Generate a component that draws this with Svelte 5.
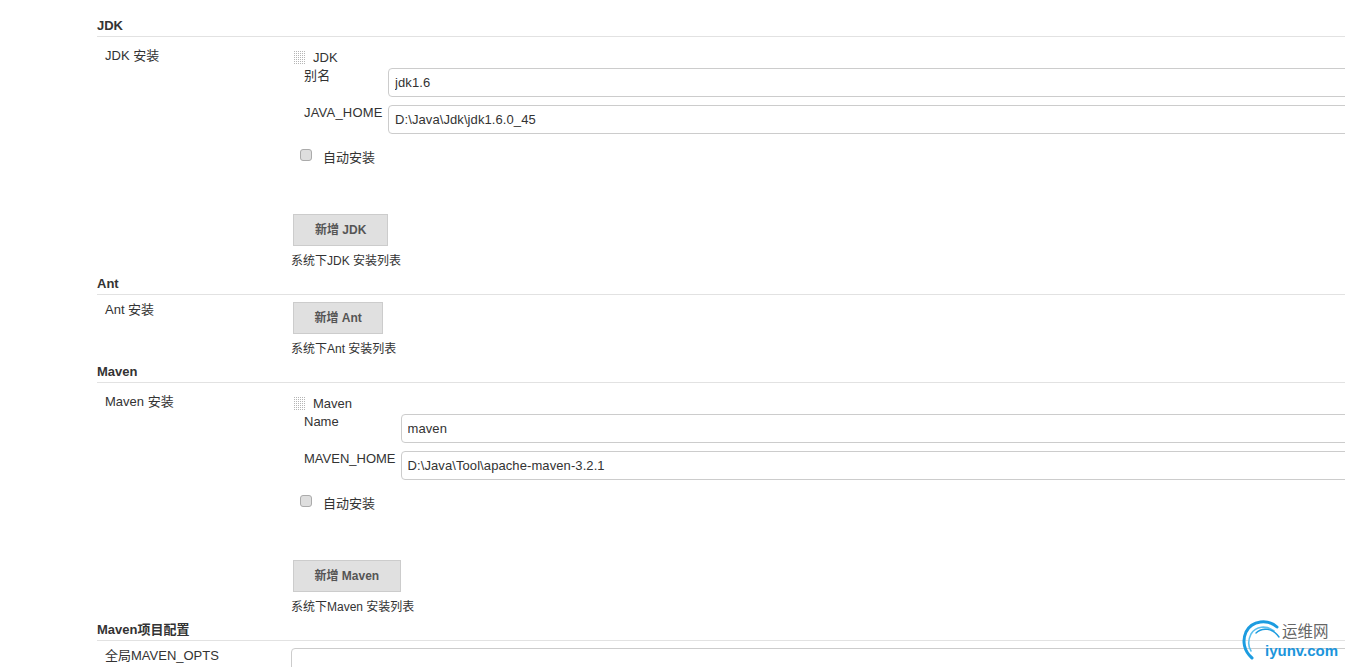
<script>
  const tools = [
    { title: 'JDK', label: 'JDK 安装', chunk: 'JDK', name: '别名', home: 'JAVA_HOME', nameValue: 'jdk1.6', homeValue: 'D:\\Java\\Jdk\\jdk1.6.0_45', add: '新增 JDK', help: '系统下JDK 安装列表' },
    { title: 'Ant', label: 'Ant 安装', add: '新增 Ant', help: '系统下Ant 安装列表' },
    { title: 'Maven', label: 'Maven 安装', chunk: 'Maven', name: 'Name', home: 'MAVEN_HOME', nameValue: 'maven', homeValue: 'D:\\Java\\Tool\\apache-maven-3.2.1', add: '新增 Maven', help: '系统下Maven 安装列表' }
  ];
</script>

<div class="page">
  <div class="form">
    {#each tools as t}
      <section>
        <h3>{t.title}</h3>
        <div class="row" class:compact={!t.chunk}>
          <div class="label">{t.label}</div>
          <div class="content">
            {#if t.chunk}
              <div class="chunk-head">
                <svg class="handle" width="12" height="14" viewBox="0 0 12 14" aria-hidden="true">
                  <defs>
                    <pattern id="dots-{t.title}" width="2" height="2" patternUnits="userSpaceOnUse">
                      <rect width="1" height="1" fill="#b5b5b5" />
                    </pattern>
                  </defs>
                  <rect width="12" height="14" fill="url(#dots-{t.title})" />
                </svg>
                <span>{t.chunk}</span>
              </div>
              <div class="fields" class:jdk={t.title === 'JDK'}>
                <label class="field-label" for="{t.title}-n">{t.name}</label>
                <input id="{t.title}-n" value={t.nameValue} />
                <label class="field-label" for="{t.title}-h">{t.home}</label>
                <input id="{t.title}-h" value={t.homeValue} />
              </div>
              <label class="auto">
                <input type="checkbox" />
                <span>自动安装</span>
              </label>
            {/if}
            <button type="button" class:wide={t.title === 'JDK'}>{t.add}</button>
            <div class="help">{t.help}</div>
          </div>
        </div>
      </section>
    {/each}
    <section>
      <h3>Maven项目配置</h3>
      <div class="row opts">
        <div class="label">全局MAVEN_OPTS</div>
        <textarea></textarea>
      </div>
    </section>
  </div>

  <div class="mark">
    <svg class="arcs" width="44" height="46" viewBox="0 0 44 46" aria-hidden="true">
      <path d="M36 9 C27 1 11 2 5 14 C1 23 3 33 11 40" fill="none" stroke="#1c9ce0" stroke-width="3" stroke-linecap="round" />
      <path d="M33 13 C25 7 15 8 10 16 C7 22 7 28 10 33" fill="none" stroke="#5cc0ee" stroke-width="1.6" stroke-linecap="round" />
      <path d="M38 19 C32 10 21 9 15 15" fill="none" stroke="#1c9ce0" stroke-width="1.4" stroke-linecap="round" />
    </svg>
    <span class="mark-cn">运维网</span>
    <span class="mark-en">iyunv.com</span>
  </div>
</div>

<style>
  :global(html), :global(body) {
    margin: 0;
    overflow: hidden;
    background: #fff;
  }
  .page {
    position: relative;
    width: 1345px;
    height: 667px;
    overflow: hidden;
    font: 13px/16px "Liberation Sans", "Noto Sans CJK SC", sans-serif;
    color: #333;
  }
  .form {
    width: 1320px;
    margin-left: 97px;
    padding-top: 17px;
  }
  h3 {
    margin: 0;
    height: 20px;
    box-sizing: border-box;
    padding-top: 1px;
    font-size: 13px;
    line-height: 16px;
    font-weight: bold;
    border-bottom: 1px solid #e2e2e2;
  }
  .row {
    display: grid;
    grid-template-columns: 196px 1fr;
    height: 238px;
    padding-left: 8px;
    box-sizing: border-box;
  }
  .row.compact {
    height: 68px;
  }
  .label {
    padding-top: 11px;
  }
  .compact .label {
    padding-top: 7px;
  }
  .content {
    min-width: 0;
  }
  .chunk-head {
    display: flex;
    align-items: center;
    gap: 7px;
    height: 16px;
    margin-top: 13px;
    margin-left: -7px;
  }
  .handle {
    flex: none;
  }
  .fields {
    display: grid;
    grid-template-columns: auto 1fr;
    column-gap: 5px;
    row-gap: 8px;
    margin-top: 2px;
    margin-left: 3px;
  }
  .fields.jdk {
    grid-template-columns: 79px 1fr;
    letter-spacing: 0.2px;
  }
  .field-label {
    padding-top: 1px;
    line-height: 14px;
  }
  input:not([type]) {
    height: 29px;
    box-sizing: border-box;
    border: 1px solid #ccc;
    border-radius: 4px;
    padding: 0 6px;
    font: 13px "Liberation Sans", sans-serif;
    letter-spacing: 0.09px;
    color: #333;
    outline: none;
    min-width: 0;
    width: 100%;
  }
  .auto {
    display: flex;
    align-items: center;
    margin-top: 15px;
    margin-left: -1px;
    height: 16px;
  }
  .auto input {
    appearance: none;
    width: 12px;
    height: 12px;
    margin: 0 11px 4px 0;
    border: 1px solid #ababab;
    border-radius: 3px;
    background: #dedede;
    box-sizing: border-box;
  }
  .auto span {
    padding-top: 1px;
  }
  button {
    display: block;
    margin: 49px 0 0 -8px;
    height: 32px;
    padding: 0 20.5px 3px;
    background: #e0e0e0;
    border: 1px solid #ccc;
    font: bold 12px "Liberation Sans", "Noto Sans CJK SC", sans-serif;
    color: #555;
  }
  button.wide {
    padding: 0 21px 3px;
  }
  .compact button {
    margin-top: 7px;
  }
  .help {
    margin: 7px 0 0 -10px;
    font-size: 12px;
    line-height: 16px;
  }
  .opts {
    grid-template-columns: 186px 1fr;
  }
  .opts .label {
    padding-top: 7px;
  }
  textarea {
    margin-top: 7px;
    height: 80px;
    border: 1px solid #ccc;
    border-radius: 4px;
    box-sizing: border-box;
    resize: none;
    outline: none;
  }
  .mark {
    position: absolute;
    left: 1241px;
    top: 618px;
    width: 104px;
    height: 46px;
  }
  .arcs {
    position: absolute;
    left: 0;
    top: 0;
  }
  .mark-cn {
    position: absolute;
    left: 41px;
    top: 5px;
    font-size: 15.5px;
    line-height: 18px;
    color: #666;
  }
  .mark-en {
    position: absolute;
    left: 24px;
    top: 24px;
    font-size: 15px;
    line-height: 18px;
    font-weight: bold;
    color: #1b95dc;
  }
</style>
